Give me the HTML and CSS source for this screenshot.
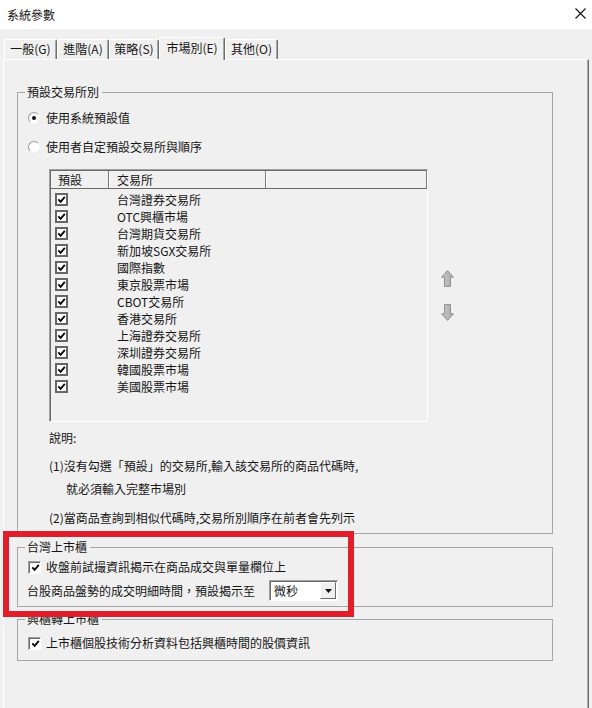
FILE: index.html
```html
<!DOCTYPE html>
<html lang="zh-Hant">
<head>
<meta charset="utf-8">
<title>系統參數</title>
<link rel="stylesheet" href="styles.css">
</head>
<body>
<div class="titlebar">
  <span class="title">系統參數</span>
  <svg class="close" width="11" height="11" viewBox="0 0 11 11"><path d="M0.5 0.5 L10.5 10.5 M10.5 0.5 L0.5 10.5" stroke="#111" stroke-width="1.1" fill="none"/></svg>
</div>
<div class="client">
  <div class="tabs">
    <div class="tab t1">一般(G)</div>
    <div class="tab t2">進階(A)</div>
    <div class="tab t3">策略(S)</div>
    <div class="tab t4 active">市場別(E)</div>
    <div class="tab t5">其他(O)</div>
  </div>
  <div class="panel">
    <fieldset class="group g1">
      <legend>預設交易所別</legend>
      <div class="radio-row r1"><span class="radio on"></span>使用系統預設值</div>
      <div class="radio-row r2"><span class="radio"></span>使用者自定預設交易所與順序</div>
      <div class="list-area">
        <div class="listview">
          <div class="lv-header">
            <div class="col c1">預設</div>
            <div class="col c2">交易所</div>
            <div class="col c3"></div>
          </div>
          <div class="lv-body">
            <div class="lv-row"><span class="lv-cell"><span class="lvcheck"><svg viewBox="0 0 9 9"><path d="M1.3 4.4 L3.6 6.8 L7.8 1.9"/></svg></span></span><span class="lv-name">台灣證券交易所</span></div>
            <div class="lv-row"><span class="lv-cell"><span class="lvcheck"><svg viewBox="0 0 9 9"><path d="M1.3 4.4 L3.6 6.8 L7.8 1.9"/></svg></span></span><span class="lv-name">OTC興櫃市場</span></div>
            <div class="lv-row"><span class="lv-cell"><span class="lvcheck"><svg viewBox="0 0 9 9"><path d="M1.3 4.4 L3.6 6.8 L7.8 1.9"/></svg></span></span><span class="lv-name">台灣期貨交易所</span></div>
            <div class="lv-row"><span class="lv-cell"><span class="lvcheck"><svg viewBox="0 0 9 9"><path d="M1.3 4.4 L3.6 6.8 L7.8 1.9"/></svg></span></span><span class="lv-name">新加坡SGX交易所</span></div>
            <div class="lv-row"><span class="lv-cell"><span class="lvcheck"><svg viewBox="0 0 9 9"><path d="M1.3 4.4 L3.6 6.8 L7.8 1.9"/></svg></span></span><span class="lv-name">國際指數</span></div>
            <div class="lv-row"><span class="lv-cell"><span class="lvcheck"><svg viewBox="0 0 9 9"><path d="M1.3 4.4 L3.6 6.8 L7.8 1.9"/></svg></span></span><span class="lv-name">東京股票市場</span></div>
            <div class="lv-row"><span class="lv-cell"><span class="lvcheck"><svg viewBox="0 0 9 9"><path d="M1.3 4.4 L3.6 6.8 L7.8 1.9"/></svg></span></span><span class="lv-name">CBOT交易所</span></div>
            <div class="lv-row"><span class="lv-cell"><span class="lvcheck"><svg viewBox="0 0 9 9"><path d="M1.3 4.4 L3.6 6.8 L7.8 1.9"/></svg></span></span><span class="lv-name">香港交易所</span></div>
            <div class="lv-row"><span class="lv-cell"><span class="lvcheck"><svg viewBox="0 0 9 9"><path d="M1.3 4.4 L3.6 6.8 L7.8 1.9"/></svg></span></span><span class="lv-name">上海證券交易所</span></div>
            <div class="lv-row"><span class="lv-cell"><span class="lvcheck"><svg viewBox="0 0 9 9"><path d="M1.3 4.4 L3.6 6.8 L7.8 1.9"/></svg></span></span><span class="lv-name">深圳證券交易所</span></div>
            <div class="lv-row"><span class="lv-cell"><span class="lvcheck"><svg viewBox="0 0 9 9"><path d="M1.3 4.4 L3.6 6.8 L7.8 1.9"/></svg></span></span><span class="lv-name">韓國股票市場</span></div>
            <div class="lv-row"><span class="lv-cell"><span class="lvcheck"><svg viewBox="0 0 9 9"><path d="M1.3 4.4 L3.6 6.8 L7.8 1.9"/></svg></span></span><span class="lv-name">美國股票市場</span></div>
          </div>
        </div>
        <div class="arrows">
          <svg class="arrow up" width="13" height="17" viewBox="0 0 13 17">
            <defs><linearGradient id="ga" x1="0" y1="0" x2="1" y2="0"><stop offset="0" stop-color="#c9c9c9"/><stop offset="1" stop-color="#a9a9a9"/></linearGradient></defs>
            <polygon points="6.5,0.6 12.4,7.2 9.5,7.2 9.5,16.4 3.5,16.4 3.5,7.2 0.6,7.2" fill="url(#ga)" stroke="#8f8f8f" stroke-width="1"/>
          </svg>
          <svg class="arrow down" width="13" height="17" viewBox="0 0 13 17">
            <defs><linearGradient id="gb" x1="0" y1="0" x2="1" y2="0"><stop offset="0" stop-color="#c9c9c9"/><stop offset="1" stop-color="#a9a9a9"/></linearGradient></defs>
            <polygon points="3.5,0.6 9.5,0.6 9.5,9.8 12.4,9.8 6.5,16.4 0.6,9.8 3.5,9.8" fill="url(#gb)" stroke="#8f8f8f" stroke-width="1"/>
          </svg>
        </div>
      </div>
      <div class="note n0">說明:</div>
      <div class="note n1">(1)沒有勾選「預設」的交易所,輸入該交易所的商品代碼時,</div>
      <div class="note n2">就必須輸入完整市場別</div>
      <div class="note n3">(2)當商品查詢到相似代碼時,交易所別順序在前者會先列示</div>
    </fieldset>

    <fieldset class="group g2">
      <legend>台灣上市櫃</legend>
      <div class="check-row c-first"><span class="cbox"><svg viewBox="0 0 9 9"><path d="M1.3 4.4 L3.6 6.8 L7.8 1.9"/></svg></span>收盤前試撮資訊揭示在商品成交與單量欄位上</div>
      <div class="combo-row">
        <span class="combo-label">台股商品盤勢的成交明細時間，預設揭示至</span>
        <div class="combo">
          <span class="combo-text">微秒</span>
          <span class="combo-btn"><svg width="7" height="4" viewBox="0 0 7 4"><polygon points="0,0 7,0 3.5,4" fill="#111"/></svg></span>
        </div>
      </div>
    </fieldset>

    <fieldset class="group g3">
      <legend>興櫃轉上市櫃</legend>
      <div class="check-row c-only"><span class="cbox"><svg viewBox="0 0 9 9"><path d="M1.3 4.4 L3.6 6.8 L7.8 1.9"/></svg></span>上市櫃個股技術分析資料包括興櫃時間的股價資訊</div>
    </fieldset>
  </div>
</div>
<div class="annotation"></div>
</body>
</html>
```

FILE: styles.css
```css
html, body {
  margin: 0;
  padding: 0;
}

body {
  position: relative;
  width: 592px;
  height: 708px;
  overflow: hidden;
  background: #f0f0f0;
  font-family: "Noto Sans CJK TC", "Microsoft JhengHei", sans-serif;
  font-size: 12px;
  line-height: 16px;
  color: #151515;
}

/* title bar */
.titlebar {
  height: 29px;
  box-sizing: border-box;
  background: #ffffff;
  display: flex;
  align-items: center;
  justify-content: space-between;
  padding: 0 6px 0 7px;
}

.titlebar .title {
  font-size: 12px;
}

.close {
  display: block;
  margin-top: -2px;
}

/* client area */
.client {
  padding: 8px 0 0 3px;
}

.tabs {
  display: flex;
  align-items: flex-end;
  height: 22px;
  margin-left: 1px;
  position: relative;
  z-index: 2;
}

.tab {
  box-sizing: border-box;
  height: 20px;
  line-height: 18px;
  text-align: center;
  background: #f0f0f0;
  border-top: 1px solid #ffffff;
  border-left: 1px solid #ffffff;
  border-right: 1px solid #6d6d6d;
  border-radius: 2px 2px 0 0;
  box-shadow: inset -1px 0 0 #a8a8a8;
  white-space: nowrap;
}

.tab.t1 { width: 53px; }
.tab.t2 { width: 52px; }
.tab.t3 { width: 50px; }
.tab.t4 { width: 66px; }
.tab.t5 { width: 53px; }

.tab.active {
  height: 23px;
  line-height: 20px;
  margin-bottom: -1px;
  position: relative;
  z-index: 3;
}

/* tab panel */
.panel {
  box-sizing: border-box;
  width: 586px;
  height: 649px;
  border-top: 1px solid #ffffff;
  border-left: 1px solid #ffffff;
  border-right: 1px solid #6d6d6d;
  box-shadow: inset -1px 0 0 #a8a8a8;
  padding: 24px 0 0 13px;
  position: relative;
  z-index: 1;
}

/* group boxes */
.group {
  box-sizing: border-box;
  width: 536px;
  min-width: 0;
  margin: 0;
  border: 1px solid #a5a5a5;
  padding: 0 0 0 10px;
}

.group legend {
  padding: 0 3px 0 2px;
  margin-left: -3px;
  line-height: 16px;
}

.g1 { padding-bottom: 7px; }
.g2 { margin-top: 5px; padding-bottom: 5px; }
.g3 { margin-top: 4px; padding-bottom: 9px; }

/* radios */
.radio-row {
  display: flex;
  align-items: center;
  height: 16px;
}

.radio-row.r1 { margin-top: 10px; }
.radio-row.r2 { margin-top: 13px; }

.radio {
  box-sizing: border-box;
  width: 12px;
  height: 12px;
  border-radius: 50%;
  border: 1px solid;
  border-color: #9a9a9a #f6f6f6 #f6f6f6 #9a9a9a;
  background: #ffffff;
  margin-right: 6px;
  display: flex;
  align-items: center;
  justify-content: center;
}

.radio.on::after {
  content: "";
  width: 4px;
  height: 4px;
  border-radius: 50%;
  background: #111;
}

/* list view */
.list-area {
  display: flex;
  margin-top: 14px;
  margin-left: 21px;
}

.listview {
  box-sizing: border-box;
  width: 379px;
  height: 253px;
  border-top: 1px solid #a0a0a0;
  border-left: 1px solid #a0a0a0;
  border-right: 1px solid #ffffff;
  border-bottom: 1px solid #ffffff;
  box-shadow: inset 1px 0 0 #6a6a6a;
  background: #f0f0f0;
}

.lv-header {
  display: flex;
  height: 19px;
  box-sizing: border-box;
  border-top: 1px solid #6a6a6a;
  border-bottom: 1px solid #6a6a6a;
  margin-left: 1px;
}

.lv-header .col {
  box-sizing: border-box;
  height: 17px;
  line-height: 17px;
  border-right: 1px solid #7a7a7a;
  box-shadow: 1px 0 0 #ffffff;
}

.lv-header .c1 { width: 58px; padding-left: 7px; }
.lv-header .c2 { width: 157px; padding-left: 8px; }
.lv-header .c3 { width: 161px; border-right: 1px solid #7a7a7a; }

.lv-body {
  padding-top: 2px;
}

.lv-row {
  display: flex;
  align-items: center;
  height: 17px;
}

.lv-cell {
  box-sizing: border-box;
  width: 67px;
  padding-left: 5px;
  display: flex;
}

.lvcheck {
  box-sizing: border-box;
  width: 13px;
  height: 13px;
  border: 2px solid #666666;
  background: #ffffff;
  display: flex;
}

.lvcheck svg,
.cbox svg {
  width: 9px;
  height: 9px;
}

.lvcheck path,
.cbox path {
  fill: none;
  stroke: #000;
  stroke-width: 1.8;
}

/* move arrows */
.arrows {
  display: flex;
  flex-direction: column;
  margin-left: 13px;
  padding-top: 101px;
  gap: 17px;
}

.arrow {
  display: block;
}

/* notes */
.note {
  height: 16px;
  white-space: nowrap;
}

.note.n0 { margin-top: 8px; margin-left: 21px; }
.note.n1 { margin-top: 12px; margin-left: 21px; }
.note.n2 { margin-top: 7px; margin-left: 38px; }
.note.n3 { margin-top: 13px; margin-left: 21px; }

/* checkboxes */
.check-row {
  display: flex;
  align-items: center;
  height: 16px;
  white-space: nowrap;
}

.check-row.c-first { margin-top: 4px; }
.check-row.c-only { margin-top: 8px; }

.cbox {
  box-sizing: border-box;
  width: 13px;
  height: 13px;
  border: 1px solid;
  border-color: #a0a0a0 #ffffff #ffffff #a0a0a0;
  box-shadow: inset 1px 1px 0 #6a6a6a;
  background: #ffffff;
  margin-right: 5px;
  display: flex;
  align-items: center;
  justify-content: center;
  padding: 1px 0 0 1px;
}

/* combo */
.combo-row {
  display: flex;
  align-items: center;
  height: 21px;
  margin-top: 5px;
  margin-left: -1px;
}

.combo-label {
  white-space: nowrap;
}

.combo {
  box-sizing: border-box;
  width: 69px;
  height: 21px;
  margin-left: 14px;
  display: flex;
  align-items: stretch;
  background: #ffffff;
  border: 1px solid;
  border-color: #a0a0a0 #ffffff #ffffff #a0a0a0;
  box-shadow: inset 1px 1px 0 #6a6a6a;
  padding: 1px 1px 1px 1px;
}

.combo-text {
  flex: 1;
  padding-left: 3px;
  line-height: 17px;
}

.combo-btn {
  box-sizing: border-box;
  width: 16px;
  background: #f0f0f0;
  border: 1px solid;
  border-color: #ffffff #6a6a6a #6a6a6a #ffffff;
  display: flex;
  align-items: center;
  justify-content: center;
}

/* red annotation box drawn over the screenshot */
.annotation {
  position: absolute;
  left: 3px;
  top: 531px;
  width: 351px;
  height: 86px;
  box-sizing: border-box;
  border: 6px solid #e11f2c;
  z-index: 10;
  pointer-events: none;
}
```
